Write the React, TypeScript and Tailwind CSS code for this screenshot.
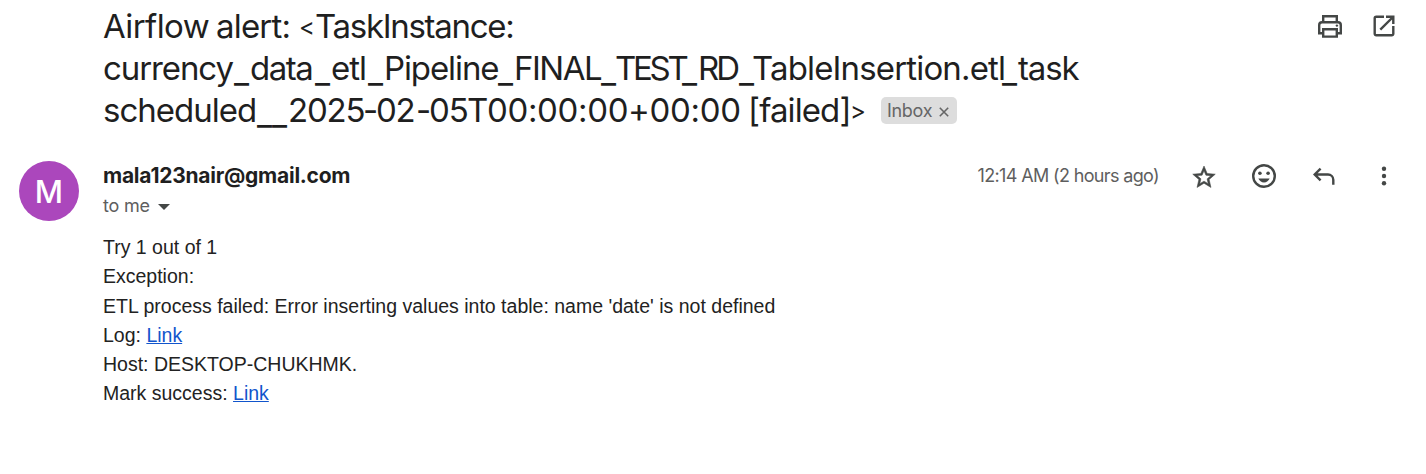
import React from "react";

const seg = "inline-block whitespace-pre";
const bar = "inline-block whitespace-pre pt-[3px] w-[16px] tracking-[-0.5px]";
const icon = "block size-[30px] shrink-0 text-[#444746]";

function PrintIcon() {
  return (
    <svg className={icon} viewBox="0 0 30 30" fill="none" stroke="currentColor" strokeWidth="2.4">
      <path d="M8.2 11V5.2h13.6V11" />
      <path d="M8 22.3H4.2V14a2.8 2.8 0 0 1 2.8-2.8h16a2.8 2.8 0 0 1 2.8 2.8v8.3H22" />
      <path d="M8.2 18.2h13.6v7.4H8.2z" />
      <circle cx="21.9" cy="14.6" r="1.2" fill="currentColor" stroke="none" />
    </svg>
  );
}

function OpenIcon() {
  return (
    <svg className={icon} viewBox="0 0 30 30" fill="none" stroke="currentColor" strokeWidth="2.4">
      <path d="M15 5.7H7.2a1.5 1.5 0 0 0-1.5 1.5v15.6a1.5 1.5 0 0 0 1.5 1.5h15.6a1.5 1.5 0 0 0 1.5-1.5V15" />
      <path d="M17 5.7h7.3V13M24 6L11.3 18.7" />
    </svg>
  );
}

function StarIcon() {
  return (
    <svg className={icon} viewBox="0 0 30 30" fill="currentColor" stroke="currentColor" strokeWidth=".5">
      <path transform="translate(1.5 2.8) scale(1.125)" d="M22 9.24l-7.19-.62L12 2 9.19 8.63 2 9.24l5.46 4.73L5.82 21 12 17.27 18.18 21l-1.63-7.03L22 9.24zM12 15.4l-3.76 2.27 1-4.28-3.32-2.88 4.38-.38L12 6.1l1.71 4.04 4.38.38-3.32 2.88 1 4.28L12 15.4z" />
    </svg>
  );
}

function SmileIcon() {
  return (
    <svg className={icon} viewBox="0 0 30 30" fill="currentColor">
      <circle cx="15" cy="15" r="10.8" fill="none" stroke="currentColor" strokeWidth="2.4" />
      <circle cx="10.9" cy="12.3" r="1.8" />
      <circle cx="19.1" cy="12.3" r="1.8" />
      <path d="M9.4 17.5h11.2c-.9 2.4-3 3.9-5.6 3.9s-4.7-1.5-5.6-3.9z" />
    </svg>
  );
}

function ReplyIcon() {
  return (
    <svg className={icon} viewBox="0 0 30 30" fill="none" stroke="currentColor" strokeWidth="2.4">
      <path d="M11.6 7.6L5.7 13.5l5.9 5.9M5.9 13.5H19a5.3 5.3 0 0 1 5.3 5.3v4.9" />
    </svg>
  );
}

function MoreIcon() {
  return (
    <svg className={icon} viewBox="0 0 30 30" fill="currentColor">
      <circle cx="15" cy="7.8" r="2.2" />
      <circle cx="15" cy="15" r="2.2" />
      <circle cx="15" cy="22.2" r="2.2" />
    </svg>
  );
}

export default function App() {
  return (
    <main className="h-[474px] w-[1426px] overflow-hidden bg-white font-['Inter',sans-serif] text-[#1f1f1f]">
      <header className="flex h-[132px] items-start pl-[103px] pr-[27px] pt-[5px]">
        <h1 className="grow whitespace-nowrap text-[33px] font-normal leading-[42px]">
          <span className="flex h-[42px]">
            <span className={`${seg} w-[113px] tracking-[-0.6px]`}>Airflow </span>
            <span className={`${seg} w-[83px] tracking-[-0.8px]`}>alert: </span>
            <span className={`${seg} w-[16px] pt-px text-[24px]`}>&lt;</span>
            <span className={`${seg} tracking-[-1.3px]`}>TaskInstance:</span>
          </span>
          <span className="flex h-[42px]">
            <span className={`${seg} w-[131px] tracking-[-1.1px]`}>currency</span>
            <span className={bar}>_</span>
            <span className={`${seg} w-[65px] tracking-[-1.5px]`}>data</span>
            <span className={bar}>_</span>
            <span className={`${seg} w-[37px] tracking-[-1px]`}>etl</span>
            <span className={bar}>_</span>
            <span className={`${seg} w-[114px] tracking-[-1.1px]`}>Pipeline</span>
            <span className={bar}>_</span>
            <span className={`${seg} w-[87px] tracking-[-1.5px]`}>FINAL</span>
            <span className={`${bar} mr-[-2px]`}>_</span>
            <span className={`${seg} w-[67px] tracking-[-3.3px]`}>TEST</span>
            <span className={bar}>_</span>
            <span className={`${seg} w-[41px] tracking-[-3px]`}>RD</span>
            <span className={`${bar} mr-[-3px]`}>_</span>
            <span className={`${seg} w-[250px] tracking-[-0.85px]`}>TableInsertion.etl</span>
            <span className={bar}>_</span>
            <span className={`${seg} tracking-[-1.1px]`}>task</span>
          </span>
          <span className="flex h-[42px]">
            <span className={`${seg} w-[154px] tracking-[-1px]`}>scheduled</span>
            <span className={`${seg} w-[31px] pt-[3px] tracking-[-0.1px]`}>__</span>
            <span className={`${seg} w-[75px] tracking-[-1.2px]`}>2025</span>
            <span className={`${seg} w-[13px]`}>-</span>
            <span className={`${seg} w-[40px] tracking-[-1.2px]`}>02</span>
            <span className={`${seg} w-[13px]`}>-</span>
            <span className={`${seg} w-[38px] tracking-[-1px]`}>05</span>
            <span className={`${seg} w-[20px]`}>T</span>
            <span className={`${seg} w-[255px] tracking-[-0.35px]`}>00:00:00+00:00</span>
            <span className={`${seg} ml-[6px] w-[102px] tracking-[-0.9px]`}>[failed]</span>
            <span className={`${seg} w-[17px] pt-px text-[24px]`}>&gt;</span>
            <span className="ml-[14px] mt-[8px] flex h-[27px] w-[76px] items-center rounded-[5px] bg-[#ddd] pl-[6px] text-[18px] leading-none text-[#666]">
              <span className="w-[52px] tracking-[-0.3px]">Inbox</span>
              <svg className="mt-[3px] size-[10px]" viewBox="0 0 10 10" fill="none" stroke="#666" strokeWidth="1.6"><path d="M.8.8l8.4 8.4M9.2.8L.8 9.2" /></svg>
            </span>
          </span>
        </h1>
        <div className="flex gap-[24px] pt-[6px]">
          <PrintIcon />
          <OpenIcon />
        </div>
      </header>
      <section className="flex items-start pl-[19px] pr-[27px] pt-[29px]">
        <div className="flex size-[60px] items-center justify-center rounded-full bg-[#ab47bc] pt-[2px] text-[31px] font-medium text-white">M</div>
        <div className="ml-[24px] grow">
          <div className="text-[21px] font-bold leading-[30px] tracking-[-0.25px]">mala123nair@gmail.com</div>
          <div className="flex items-center text-[18px] leading-[30px] tracking-[-0.2px] text-[#5e5e5e]">
            to me
            <svg className="ml-[8px] mt-px h-[6px] w-[12px]" viewBox="0 0 12 6" fill="#444746"><path d="M0 0h12L6 6z" /></svg>
          </div>
        </div>
        <div className="mr-[30px] whitespace-nowrap text-[18px] leading-[30px] tracking-[-0.64px] text-[#5e5e5e]">12:14 AM (2 hours ago)</div>
        <div className="flex gap-[30px]">
          <StarIcon />
          <SmileIcon />
          <ReplyIcon />
          <MoreIcon />
        </div>
      </section>
      <section className="mt-[12px] pl-[103px] font-['Liberation_Sans',sans-serif] text-[19.5px] leading-[29.25px] text-[#222]">
        <p>Try 1 out of 1</p>
        <p>Exception:</p>
        <p>ETL process failed: Error inserting values into table: name 'date' is not defined</p>
        <p>Log: <a className="text-[#1155cc] underline">Link</a></p>
        <p>Host: DESKTOP-CHUKHMK.</p>
        <p>Mark success: <a className="text-[#1155cc] underline">Link</a></p>
      </section>
    </main>
  );
}
